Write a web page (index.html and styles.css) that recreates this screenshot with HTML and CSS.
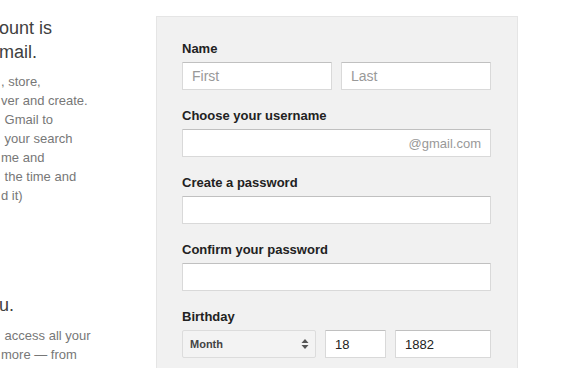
FILE: index.html
```html
<!DOCTYPE html>
<html lang="en">

<head>
    <meta charset="UTF-8">
    <meta name="viewport" content="width=device-width, initial-scale=1.0">
    <title>Create your Google Account</title>
    <link rel="stylesheet" href="styles.css">
</head>

<body>
    <div class="page">
        <div class="intro">
            <h2>ount is<br>mail.</h2>
            <p>, store,<br>ver and create.<br>&nbsp;Gmail to<br>&nbsp;your search<br>me and<br>&nbsp;the time and<br>d it)</p>
            <h2 class="second">u.</h2>
            <p class="after">&nbsp;access all your<br>more &mdash; from</p>
        </div>

        <form class="signup">
            <label class="field-label">Name</label>
            <div class="name-row">
                <input class="text-input" type="text" placeholder="First">
                <input class="text-input" type="text" placeholder="Last">
            </div>

            <label class="field-label">Choose your username</label>
            <div class="text-input username">
                <input type="text">
                <span class="suffix">@gmail.com</span>
            </div>

            <label class="field-label">Create a password</label>
            <input class="text-input" type="password">

            <label class="field-label">Confirm your password</label>
            <input class="text-input" type="password">

            <label class="field-label">Birthday</label>
            <div class="birthday-row">
                <div class="month-select">
                    <span>Month</span>
                    <svg width="8" height="12" viewBox="0 0 8 12">
                        <path d="M4 1 L7.5 5 H0.5 Z" fill="#555" />
                        <path d="M4 11 L7.5 7 H0.5 Z" fill="#555" />
                    </svg>
                </div>
                <input class="text-input" type="text" value="18">
                <input class="text-input" type="text" value="1882">
            </div>
        </form>
    </div>
</body>

</html>
```

FILE: styles.css
```css
body {
    margin: 0;
    background-color: #fff;
    font-family: 'Liberation Sans', Arial, sans-serif;
    color: #222;
}

.page {
    display: flex;
    align-items: flex-start;
    padding-top: 16px;
}

/* left column is cut off by the window */
.intro {
    width: 130px;
    margin-right: 26px;
    overflow: hidden;
    white-space: nowrap;
}

.intro h2 {
    margin: 0 0 0 -1px;
    font-size: 18px;
    font-weight: normal;
    line-height: 24px;
    color: #404040;
}

.intro p {
    margin: 8px 0 0 1px;
    font-size: 13px;
    line-height: 19px;
    color: #777;
}

.intro h2.second {
    margin-top: 88px;
}

.intro p.after {
    margin-top: 9px;
}

.signup {
    width: 309px;
    padding: 24px 26px 30px 25px;
    background-color: #f1f1f1;
    border: 1px solid #e5e5e5;
    display: flex;
    flex-direction: column;
}

.field-label {
    display: block;
    font-size: 13px;
    font-weight: bold;
    line-height: 16px;
    color: #222;
    margin-bottom: 5px;
}

.text-input {
    box-sizing: border-box;
    height: 28px;
    width: 100%;
    margin: 0 0 18px;
    padding: 0 9px;
    background-color: #fff;
    border: 1px solid #d9d9d9;
    border-top-color: #c0c0c0;
    border-radius: 1px;
    font-family: inherit;
    font-size: 13px;
    color: #222;
}

.text-input::placeholder {
    color: #999;
    font-size: 14px;
}

.name-row {
    display: grid;
    grid-template-columns: 1fr 1fr;
    gap: 9px;
}

.username {
    display: flex;
    align-items: center;
}

.username input {
    flex: 1;
    min-width: 0;
    border: none;
    outline: none;
    background: transparent;
    padding: 0;
}

.username .suffix {
    font-size: 13px;
    color: #999;
}

.birthday-row {
    display: grid;
    grid-template-columns: 134px 61px 1fr;
    gap: 9px;
}

.birthday-row .text-input {
    margin-bottom: 0;
}

.month-select {
    box-sizing: border-box;
    height: 28px;
    display: flex;
    align-items: center;
    justify-content: space-between;
    padding: 0 6px 0 7px;
    background-color: #f3f3f3;
    border: 1px solid #dcdcdc;
    border-radius: 2px;
    font-size: 11px;
    font-weight: bold;
    color: #444;
}
```
